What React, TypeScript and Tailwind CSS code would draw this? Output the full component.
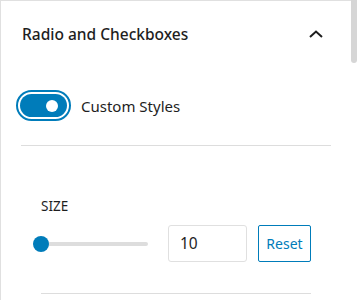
export default function App() {
  return (
    <div className="relative flex h-[300px] w-[357px] overflow-hidden bg-white font-['Noto_Sans',sans-serif] text-[#1e1e1e]">
      <div className="w-[351px] border-l-[1.5px] border-t-[1.5px] border-[#e0e0e0]">
        {/* panel header */}
        <div className="flex items-center justify-between pl-[21px] pr-[28px] pt-[21px]">
          <h2 className="text-[15.5px] leading-[24px] font-medium">Radio and Checkboxes</h2>
          <svg width="14" height="8" viewBox="0 0 14 8" fill="none">
            <polyline points="1,7 7,1.5 13,7" stroke="#1e1e1e" strokeWidth="2" />
          </svg>
        </div>

        <div className="px-[20px]">
          {/* toggle */}
          <div className="mt-[44px] flex items-center gap-[10px]">
            <div className="-ml-[5px] rounded-full border-2 border-[#007cba] bg-white p-[2px]">
              <div className="flex h-[23px] w-[47px] items-center justify-end rounded-full bg-[#007cba] pr-[9px]">
                <div className="h-[12px] w-[12px] rounded-full bg-white" />
              </div>
            </div>
            <span className="text-[15px] leading-[22px]">Custom Styles</span>
          </div>

          <div className="mt-[24px] h-px bg-[#dddddd]" />

          {/* size control */}
          <div className="px-[20px]">
            <div className="mt-[51px] text-[13.5px] leading-[18px] uppercase">Size</div>
            <div className="mt-[10px] flex h-[37px] items-center">
              <div className="relative h-[4px] w-[107px] rounded-full bg-[#dddddd]">
                <div className="absolute -left-[8px] -top-[6px] h-[16px] w-[16px] rounded-full bg-[#007cba]" />
              </div>
              <div className="ml-[20px] flex h-[37px] w-[79px] items-center rounded-[3px] border border-[#e0e0e0] px-[11px] text-[15.5px]">
                10
              </div>
              <button className="ml-[11px] h-[37px] w-[53px] rounded-[2px] border-[1.5px] border-[#007cba] text-[14px] text-[#007cba]">
                Reset
              </button>
            </div>
            <div className="mt-[31px] h-px bg-[#dddddd]" />
          </div>
        </div>
      </div>

      {/* scrollbar */}
      <div className="w-[6px]">
        <div className="h-[63px] rounded-b-full bg-[#d6d6d6]" />
      </div>
    </div>
  )
}
